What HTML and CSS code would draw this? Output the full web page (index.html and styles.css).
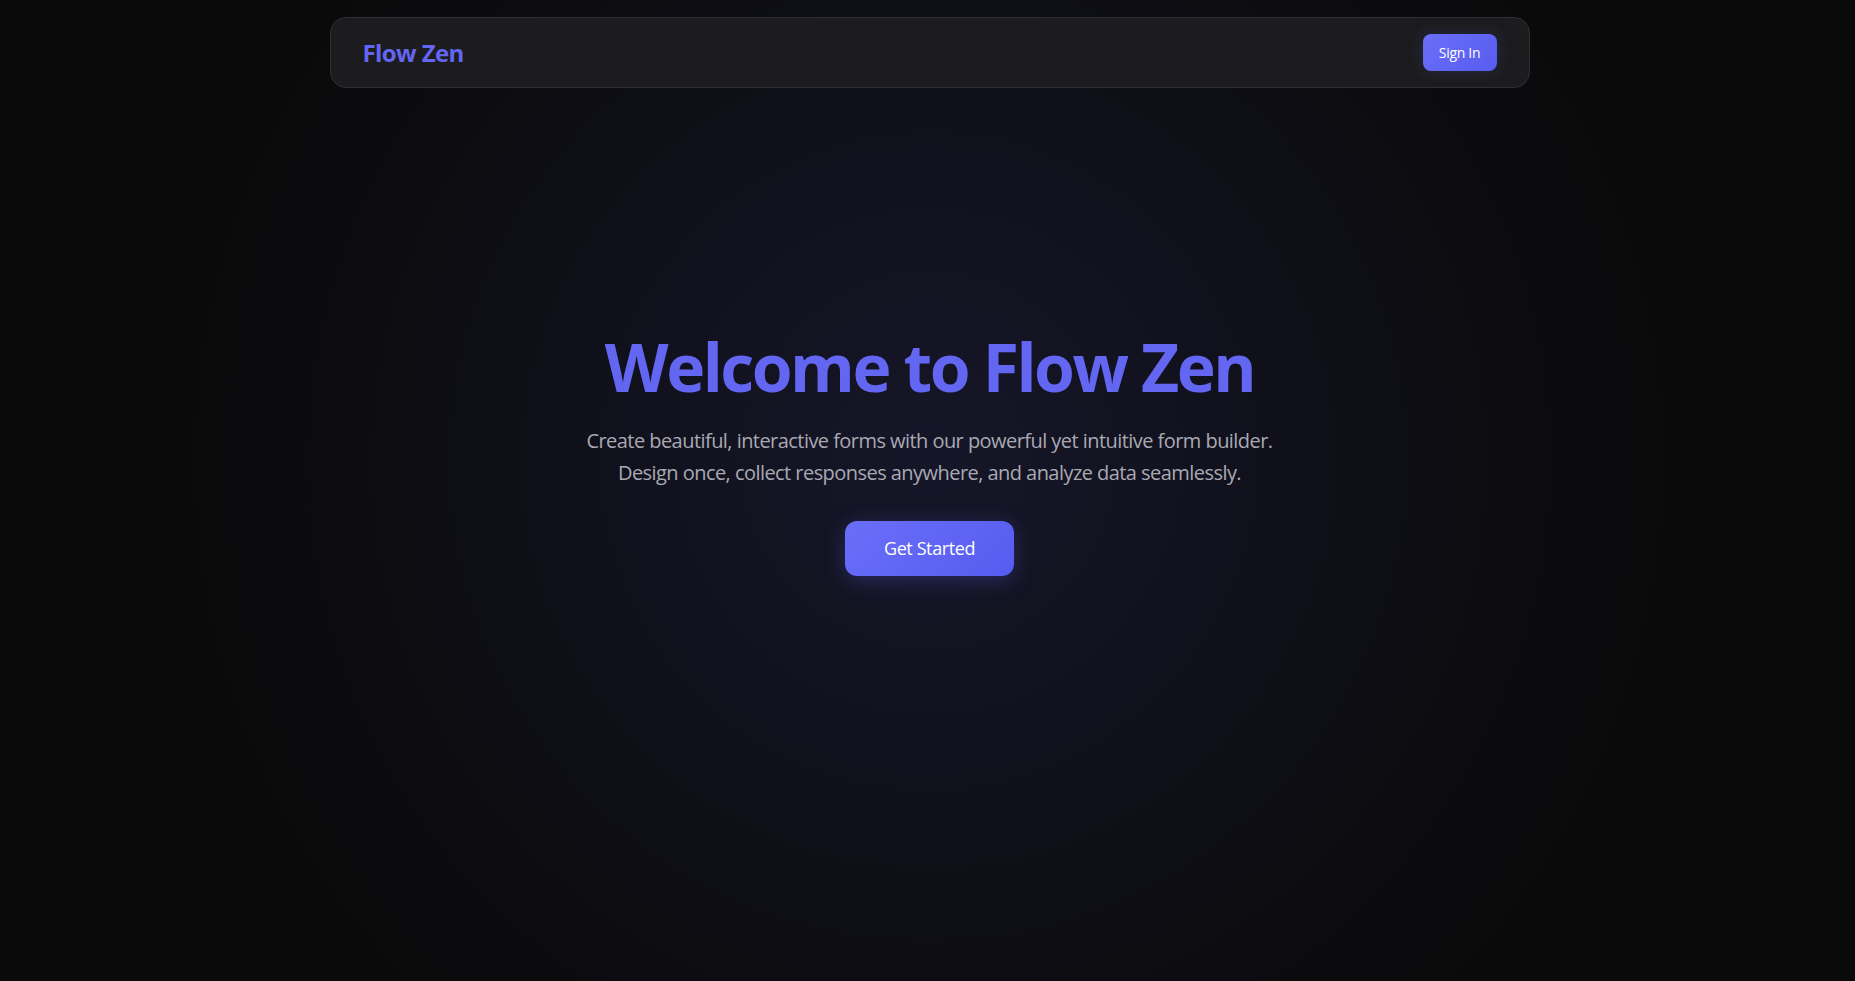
FILE: index.html
```html
<!DOCTYPE html>
<html lang="en">
<head>
<meta charset="utf-8">
<title>Flow Zen</title>
<link rel="stylesheet" href="styles.css">
</head>
<body>
<div class="page">
  <nav class="nav">
    <a class="logo" href="#">Flow Zen</a>
    <button class="btn-signin">Sign In</button>
  </nav>
  <main class="hero">
    <h1 class="hero-title">Welcome to Flow Zen</h1>
    <p class="hero-text">Create beautiful, interactive forms with our powerful yet intuitive form builder. Design once, collect responses anywhere, and analyze data seamlessly.</p>
    <button class="btn-start">Get Started</button>
  </main>
</div>
</body>
</html>
```
FILE: styles.css
```css
* { box-sizing: border-box; }
html, body {
  margin: 0;
  padding: 0;
  height: 100%;
}
body {
  font-family: "Open Sans", "Noto Sans", sans-serif;
  background-color: #0a0a0b;
  background-image: radial-gradient(circle 750px at 50.1% 47%, rgba(99, 102, 241, 0.125) 0%, rgba(99, 102, 241, 0.085) 35%, rgba(99, 102, 241, 0.03) 70%, rgba(99, 102, 241, 0) 100%);
  color: #e4e4e7;
  overflow: hidden;
}
.page {
  min-height: 100vh;
  padding-left: 4px;
  display: flex;
  flex-direction: column;
  align-items: center;
}
.nav {
  width: 1200px;
  margin-top: 17px;
  padding: 16px 32px;
  display: flex;
  align-items: center;
  justify-content: space-between;
  background: #1c1c1e;
  border: 1px solid #2e2e33;
  border-radius: 16px;
}
.logo {
  font-size: 24px;
  line-height: 29px;
  font-weight: 700;
  color: #6366f1;
  text-decoration: none;
  letter-spacing: -0.6px;
}
.btn-signin {
  font-family: inherit;
  font-size: 14px;
  line-height: 21px;
  padding: 8px 16px;
  width: 74px;
  border: none;
  border-radius: 8px;
  color: #ffffff;
  background: linear-gradient(135deg, #6a6ef8, #575cf0);
  box-shadow: 0 0 16px rgba(99, 102, 241, 0.18);
  letter-spacing: -0.3px;
  cursor: pointer;
}
.hero {
  display: flex;
  flex-direction: column;
  align-items: center;
  text-align: center;
  padding-top: 239px;
}
.hero-title {
  margin: 0 0 19px;
  font-size: 66px;
  line-height: 79px;
  font-weight: 700;
  color: #6366f1;
  letter-spacing: -2.5px;
}
.hero-text {
  margin: 0 0 32px;
  max-width: 700px;
  font-size: 20px;
  line-height: 32px;
  color: #a9a9b3;
  letter-spacing: -0.55px;
}
.btn-start {
  font-family: inherit;
  font-size: 18px;
  line-height: 23px;
  padding: 16px 0;
  width: 169px;
  border: none;
  border-radius: 12px;
  color: #ffffff;
  background: linear-gradient(135deg, #6a6ef8, #575cf0);
  box-shadow: 0 4px 22px rgba(99, 102, 241, 0.3);
  letter-spacing: -0.4px;
  cursor: pointer;
}
```
